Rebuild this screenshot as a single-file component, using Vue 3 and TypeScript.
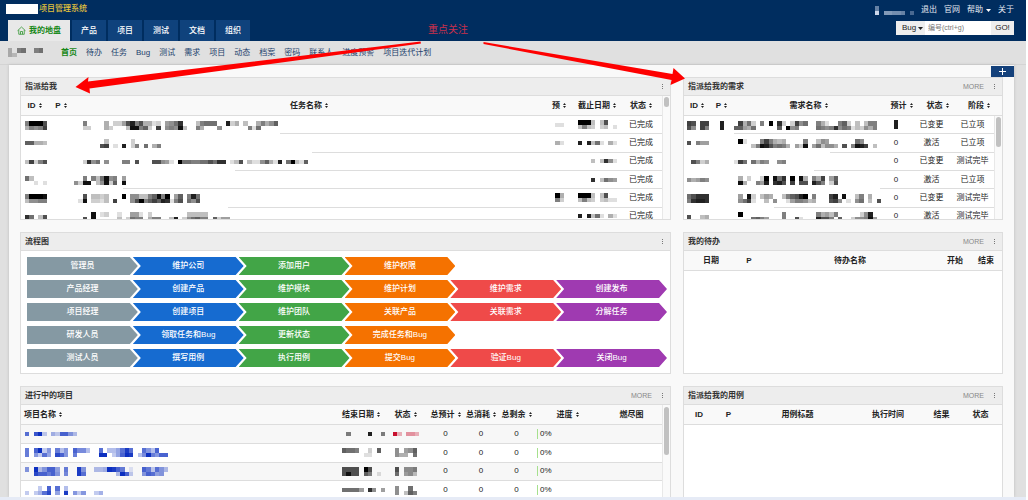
<script setup lang="ts">
import { h, type FunctionalComponent } from 'vue'

interface Column { label: string; width?: number; sort?: boolean }
interface Task { id: string; name: string; est: string; due: string; line: number }
interface Story { id: string; p: string; name: string; est: string; status: string; stage: string; line: number }
interface Project { name: string; end: string; status: string; tint: string }

/* Pixelated block: two rows separated by "/", one hex digit per cell, 0 is darkest. */
const Mosaic: FunctionalComponent<{ cells: string; tint?: string }> = (props) => {
  const lines = props.cells.split('/')
  const cols = Math.max(...lines.map((l) => l.length))
  const rects = lines.flatMap((line, y) =>
    [...line].flatMap((c, x) =>
      c === '.' ? [] : [h('rect', { x: x * 13, y: y * 13, width: 13, height: 13, 'fill-opacity': 1 - parseInt(c, 16) / 16 })]
    )
  )
  return h('svg', {
    width: Math.round((cols * 13) / 3),
    height: lines.length === 2 ? 9 : 4,
    viewBox: `0 0 ${cols * 13} ${lines.length * 13}`,
    preserveAspectRatio: 'none',
    fill: props.tint ?? '#000',
    'shape-rendering': 'crispEdges',
    'aria-hidden': 'true',
    style: { display: 'block' }
  }, rects)
}
Mosaic.props = ['cells', 'tint']

const SortMark: FunctionalComponent = () =>
  h('svg', { width: 3, height: 5, viewBox: '0 0 6 10', 'aria-hidden': 'true', fill: '#222' }, [
    h('path', { d: 'M3 0 6 4H0zM3 10 0 6h6z' })
  ])

const tabs = ['产品', '项目', '测试', '文档', '组织']
const subnav = ['首页', '待办', '任务', 'Bug', '测试', '需求', '项目', '动态', '档案', '密码', '联系人', '进度预警', '项目迭代计划']

const taskCols: Column[] = [
  { label: 'ID', width: 27, sort: true }, { label: 'P', width: 26, sort: true }, { label: '任务名称', sort: true },
  { label: '预', width: 30, sort: true }, { label: '截止日期', width: 46, sort: true }, { label: '状态', width: 42, sort: true }
]
const tasks: Task[] = [
  { id: '80005/b8984', name: '..8....b.dda5285bbed.a973...c8777..2db.c..b8b96/..dd...bd...c1186d.4.9891c..8b...9......8e7', est: 'ee', due: '000c.c5/c8cd.dc.e', line: 206 },
  { id: '66bbc', name: '.......c.....d/......54.e.2.d8.7.b8', est: 'be', due: '2.2c7e.be', line: 238 },
  { id: 'c4d85', name: '..d397.9...88.5...559ae.07788775733.ec5.cee96be2.70ce6', est: '', due: '...c.c39e', line: 161 },
  { id: '7c/..e.e', name: '..8.8c7198.a/9d11.c91d6.1', est: '', due: '...3.c79a', line: 49 },
  { id: '80001/c9988', name: '..5.ccdc...0.99cc86180.a6.827/.e1.ddec.4...950864623e85.795', est: '0b/8d', due: '000c.c5/c8cd.dcee', line: 154 },
  { id: '37.c5', name: '....1.ed..e..aae.d........ccccc/..5.1.....c.d788.b88..c2.d97688.6daa', est: '', due: '2.2c7e.be', line: 162 }
]

const storyCols: Column[] = [
  { label: 'ID', width: 26, sort: true }, { label: 'P', width: 23, sort: true }, { label: '需求名称', sort: true },
  { label: '预计', width: 35, sort: true }, { label: '状态', width: 37, sort: true }, { label: '阶段', width: 46, sort: true }
]
const stories: Story[] = [
  { id: '45.44/59.48', p: '2/2', name: '.4b7d.8.0.3d.d497..8be..86d.c.c88/66ab7.....6.098....78983978ecd9b8', est: '', status: '已变更', stage: '已立项', line: 0 },
  { id: '5.8aa', p: '', name: '.0e...848bcb....8..c9a......79/....c8125878b.ad1.a7c99b.5.8124.c', est: '0', status: '激活', stage: '已立项', line: 96 },
  { id: '.58db', p: '', name: 'e47.7b89..98', est: '0', status: '已变更', stage: '测试完毕', line: 80 },
  { id: '9ba89', p: '', name: '.b.d..d0.173.0.1b.8b4.a6/.1b..8a2.325.4.55.258.d5', est: '0', status: '激活', stage: '已立项', line: 146 },
  { id: '75333/83223', p: '', name: '.a.1d.cab..c86520.8...42.1..c8.b/.974e..c.9..ea889cb...549.e.97.c.5', est: '0', status: '已变更', stage: '测试完毕', line: 40 },
  { id: '5..cb', p: '', name: '.0.........8.......8bac8.....d92/....768a...8..5e...2558.6..d9981a', est: '0', status: '激活', stage: '测试完毕', line: 0 }
]

const todoCols: Column[] = [
  { label: '日期', width: 54 }, { label: 'P', width: 22 }, { label: '待办名称' }, { label: '开始', width: 30 }, { label: '结束', width: 32 }
]
const caseCols: Column[] = [
  { label: 'ID', width: 30 }, { label: 'P', width: 29 }, { label: '用例标题' },
  { label: '执行时间', width: 72 }, { label: '结果', width: 35 }, { label: '状态', width: 43 }
]
const projectCols: Column[] = [
  { label: '项目名称', sort: true }, { label: '结束日期', width: 44, sort: true }, { label: '状态', width: 45, sort: true },
  { label: '总预计', width: 35, sort: true }, { label: '总消耗', width: 36, sort: true }, { label: '总剩余', width: 35, sort: true },
  { label: '进度', width: 67, sort: true }, { label: '燃尽图', width: 61 }
]
const projects: Project[] = [
  { name: '5.30c.ac448b', end: '.8....2..8', status: '0b.99b', tint: '#c8102e' },
  { name: '6.40c8.6b8.477b..5.bb9515..58b4/6.8c59.248.6.....00.c9401.b706844', end: '6778..d.6/.....ee', status: '9.a96/9bb.7', tint: '#000' },
  { name: '8.0b8449.6..18..bba0146.e..46c58b/..244648.7..15.......b04c..84598', end: '5555.05/5155.68.e', status: '5.998/7.a9c', tint: '#000' },
  { name: '...c.4.5.b/c.ca52.9.1.8c8..ca', end: '7777a.39.a', status: '9..7./9.c68', tint: '#000' }
]

const flow: string[][] = [
  ['管理员', '维护公司', '添加用户', '维护权限'],
  ['产品经理', '创建产品', '维护模块', '维护计划', '维护需求', '创建发布'],
  ['项目经理', '创建项目', '维护团队', '关联产品', '关联需求', '分解任务'],
  ['研发人员', '领取任务和Bug', '更新状态', '完成任务和Bug'],
  ['测试人员', '撰写用例', '执行用例', '提交Bug', '验证Bug', '关闭Bug']
]
</script>

<template>
  <div class="page">
    <header class="top">
      <div class="brand-row">
        <div class="brand"><span class="mask"></span><span>项目管理系统</span></div>
        <nav class="user">
          <Mosaic cells="9......../2.77889.b" tint="#e8f0ff" />
          <a href="#">退出</a>
          <a href="#">官网</a>
          <a href="#" class="help">帮助<svg width="5" height="3" viewBox="0 0 10 6"><path d="M0 0h10L5 6z" fill="#fff" /></svg></a>
          <a href="#">关于</a>
        </nav>
      </div>
      <div class="tab-row">
        <nav class="tabs">
          <a href="#" class="tab active">
            <svg width="9" height="9" viewBox="0 0 18 18" fill="none" stroke="#259025" stroke-width="1.500"><path d="M1 9.500 9 2l8 7.500M3.500 8v8.500h11V8M7 16.500V11h4v5.500" /></svg>
            <span>我的地盘</span>
          </a>
          <a v-for="t in tabs" :key="t" href="#" class="tab">{{ t }}</a>
        </nav>
        <form class="search" @submit.prevent>
          <div class="pick">
            <select aria-label="搜索类型"><option>Bug</option></select>
            <svg width="5" height="3" viewBox="0 0 10 6"><path d="M0 0h10L5 6z" fill="#222" /></svg>
          </div>
          <input type="text" aria-label="编号" placeholder="编号(ctrl+g)" />
          <button type="submit">GO!</button>
        </form>
      </div>
      <p class="note">重点关注</p>
    </header>

    <nav class="subnav">
      <div class="crumb"><Mosaic cells="c.98..98/cd" /></div>
      <a v-for="(s, i) in subnav" :key="s" href="#" :class="{ on: i === 0 }">{{ s }}</a>
    </nav>

    <main class="board">
      <button type="button" class="add" aria-label="添加区块">
        <svg width="9" height="9" viewBox="0 0 9 9" stroke="#fff" stroke-width="1"><path d="M4.500 1v7M1 4.500h7" /></svg>
      </button>

      <section class="panel">
        <div class="head"><h2>指派给我</h2><button type="button" class="dots" aria-label="菜单"><i></i><i></i><i></i></button></div>
        <div class="body">
          <table class="tall">
            <colgroup><col v-for="c in taskCols" :key="c.label" :style="{ width: c.width ? c.width + 'px' : 'auto' }" /></colgroup>
            <thead><tr><th v-for="c in taskCols" :key="c.label"><span class="th">{{ c.label }}<SortMark /></span></th></tr></thead>
            <tbody>
              <tr v-for="(t, i) in tasks" :key="i">
                <td class="bare pad"><Mosaic :cells="t.id" /></td>
                <td class="bare"></td>
                <td class="bare rule" :style="{ '--start': t.line + 'px' }"><Mosaic :cells="t.name" /></td>
                <td><div class="mid"><Mosaic v-if="t.est" :cells="t.est" /></div></td>
                <td class="pad"><Mosaic :cells="t.due" /></td>
                <td>已完成</td>
              </tr>
            </tbody>
          </table>
          <div class="track"><span class="thumb small"></span></div>
        </div>
      </section>

      <section class="panel">
        <div class="head"><h2>指派给我的需求</h2><a href="#" class="more">MORE</a><button type="button" class="dots" aria-label="菜单"><i></i><i></i><i></i></button></div>
        <table>
          <colgroup><col v-for="c in storyCols" :key="c.label" :style="{ width: c.width ? c.width + 'px' : 'auto' }" /></colgroup>
          <thead><tr><th v-for="c in storyCols" :key="c.label"><span class="th">{{ c.label }}<SortMark /></span></th></tr></thead>
        </table>
        <div class="body">
          <table class="stories">
            <colgroup><col class="w26" /><col class="w24" /><col /><col class="w32" /><col class="w39" /><col class="w43" /></colgroup>
            <tbody>
              <tr v-for="(s, i) in stories" :key="i">
                <td class="bare near"><Mosaic :cells="s.id" /></td>
                <td class="bare"><div class="mid"><Mosaic v-if="s.p" :cells="s.p" /></div></td>
                <td class="bare rule" :style="{ '--start': s.line + 'px' }"><Mosaic :cells="s.name" /></td>
                <td><template v-if="s.est">{{ s.est }}</template><div v-else class="mid"><Mosaic cells="2/2" /></div></td>
                <td>{{ s.status }}</td>
                <td>{{ s.stage }}</td>
              </tr>
            </tbody>
          </table>
          <div class="track"><span class="thumb"></span></div>
        </div>
      </section>

      <section class="panel">
        <div class="head"><h2>流程图</h2><button type="button" class="dots" aria-label="菜单"><i></i><i></i><i></i></button></div>
        <div class="flow">
          <div v-for="(row, r) in flow" :key="r" class="flow-row">
            <span v-for="(s, i) in row" :key="s" class="step" :class="'c' + i">{{ s }}</span>
          </div>
        </div>
      </section>

      <section class="panel">
        <div class="head"><h2>我的待办</h2><a href="#" class="more">MORE</a><button type="button" class="dots" aria-label="菜单"><i></i><i></i><i></i></button></div>
        <table>
          <colgroup><col v-for="c in todoCols" :key="c.label" :style="{ width: c.width ? c.width + 'px' : 'auto' }" /></colgroup>
          <thead><tr><th v-for="c in todoCols" :key="c.label">{{ c.label }}</th></tr></thead>
        </table>
      </section>

      <section class="panel">
        <div class="head"><h2>进行中的项目</h2><a href="#" class="more">MORE</a><button type="button" class="dots" aria-label="菜单"><i></i><i></i><i></i></button></div>
        <div class="body">
          <table class="projects">
            <colgroup><col v-for="c in projectCols" :key="c.label" :style="{ width: c.width ? c.width + 'px' : 'auto' }" /></colgroup>
            <thead><tr><th v-for="c in projectCols" :key="c.label"><span class="th">{{ c.label }}<SortMark v-if="c.sort" /></span></th></tr></thead>
            <tbody>
              <tr v-for="(p, i) in projects" :key="i">
                <td class="pad"><Mosaic :cells="p.name" tint="#0c2fc0" /></td>
                <td class="near"><Mosaic :cells="p.end" /></td>
                <td><div class="mid"><Mosaic :cells="p.status" :tint="p.tint" /></div></td>
                <td>0</td>
                <td>0</td>
                <td>0</td>
                <td class="near"><span class="progress">0%</span></td>
                <td></td>
              </tr>
            </tbody>
          </table>
          <div class="track"><span class="thumb long"></span></div>
        </div>
      </section>

      <section class="panel">
        <div class="head"><h2>指派给我的用例</h2><a href="#" class="more">MORE</a><button type="button" class="dots" aria-label="菜单"><i></i><i></i><i></i></button></div>
        <table>
          <colgroup><col v-for="c in caseCols" :key="c.label" :style="{ width: c.width ? c.width + 'px' : 'auto' }" /></colgroup>
          <thead><tr><th v-for="c in caseCols" :key="c.label">{{ c.label }}</th></tr></thead>
        </table>
      </section>
    </main>

    <svg class="arrows" width="700" height="100" viewBox="0 0 700 100" fill="#fe0000" aria-hidden="true">
      <path d="M420.500 41.500 88 81.500 88.500 77 75.500 87 90 93.500 89.500 88.500 421 43.500z" />
      <path d="M483.500 42 672.500 74 673.500 68 685 78.500 670.500 85 671.500 80 483.500 44z" />
    </svg>
  </div>
</template>

<style>
html, body { margin: 0; background: #fff; }
</style>

<style scoped>
.page {
  position: relative;
  box-sizing: border-box;
  height: 100vh;
  margin-right: 2px;
  overflow: hidden;
  display: flex;
  flex-direction: column;
  background: #e0e0e0;
  border-bottom: 3px solid #e6ebf6;
  font: 8px/12px "Liberation Sans", "Noto Sans CJK SC", sans-serif;
  color: #222;
}
a { color: inherit; text-decoration: none; }
button, input, select { font: inherit; border: 0; margin: 0; padding: 0; border-radius: 0; }

.top { position: relative; flex: none; background: #002d5f; }
.brand-row { height: 20px; display: flex; justify-content: space-between; padding: 0 12px 0 6px; }
.brand { display: flex; align-items: center; height: 17px; color: #e3c23c; font-weight: 500; }
.mask { width: 32px; height: 10px; margin-right: 1px; background: #fff; }
.user { display: flex; align-items: center; gap: 7px; color: #e6ebf2; }
.help { display: flex; align-items: center; gap: 3px; }
.tab-row { display: flex; justify-content: space-between; padding: 0 12px 0 8px; height: 21px; }
.tabs { display: flex; gap: 2px; }
.tab { display: flex; align-items: center; gap: 3px; padding: 0 9px; background: #0f427c; color: #fff; font-weight: 500; }
.tab.active { background: #e8e8e8; color: #168716; font-weight: 700; }
.search { display: flex; height: 14px; margin-top: 1px; border: 0; }
.pick { position: relative; display: flex; background: #eee; }
.pick select { width: 29px; padding-left: 6px; appearance: none; background: transparent; color: #222; }
.pick svg { position: absolute; right: 2px; top: 6px; pointer-events: none; }
.search input { width: 66px; box-sizing: border-box; padding: 0 3px; background: #fff; color: #333; font-size: 7px; }
.search input::placeholder { color: #777; opacity: 1; }
.search button { width: 23px; background: #eee; color: #222; }
.note { position: absolute; left: 428px; top: 23px; margin: 0; font-size: 10px; line-height: 14px; color: #c8304c; }

.subnav { flex: none; height: 24px; display: flex; align-items: center; gap: 9px; padding-left: 8px; color: #1c3f6c; border-bottom: 1px solid #d4d4d4; box-sizing: border-box; }
.crumb { width: 44px; }
.subnav .on { color: #168716; font-weight: 700; }

.board {
  position: relative;
  flex: 1;
  min-height: 0;
  margin: 0 12px 0 9px;
  padding: 12px 11px 0;
  background: #f9f9f9;
  box-shadow: 0 0 3px #bbb;
  display: grid;
  grid-template-columns: minmax(0, 651fr) minmax(0, 320fr);
  grid-template-rows: 143px 142px 142px;
  gap: 12px;
}
.add { position: absolute; right: 0; top: 1px; width: 23px; height: 11px; display: grid; place-items: center; background: #14417b; }

.panel { border: 1px solid #ddd; background: #fff; overflow: hidden; display: flex; flex-direction: column; }
.head { flex: none; height: 18px; box-sizing: border-box; display: flex; align-items: center; background: #ededed; border-bottom: 1px solid #ddd; padding: 0 6px 0 4px; }
.head h2 { flex: 1; margin: 0; font-size: 8px; line-height: 12px; font-weight: 700; color: #333; }
.more { font-size: 7px; color: #888; margin-right: 8px; }
.dots { width: 4px; display: flex; flex-direction: column; align-items: center; gap: 1px; background: none; }
.dots i { width: 1px; height: 1px; background: #777; }

.body { display: flex; align-items: flex-start; min-height: 0; }
table { width: 100%; table-layout: fixed; border-collapse: separate; border-spacing: 0; }
.body table { flex: 1; width: 0; }
.tall { height: 130px; }
.stories { height: 110px; }
.projects { height: 95px; }
.w24 { width: 24px; } .w26 { width: 26px; } .w32 { width: 32px; } .w39 { width: 39px; } .w43 { width: 43px; }
th, td { padding: 0; text-align: center; white-space: nowrap; line-height: 12px; border-bottom: 1px solid #ddd; }
th { height: 19px; background: #f9f9f9; font-weight: 700; color: #222; }
.th { display: flex; align-items: center; justify-content: center; gap: 3px; }
.projects th:first-child .th { justify-content: flex-start; padding-left: 3px; }
.bare { border-bottom: 0; }
.rule { background: linear-gradient(#ddd, #ddd) right bottom / calc(100% - var(--start)) 1px no-repeat; }
.pad { padding-left: 4px; }
.near { padding-left: 3px; }
.mid { display: flex; justify-content: center; }
.projects tbody tr:nth-child(odd) { background: #f7f7f7; }
.progress { display: block; width: 12px; border-left: 1px solid #a6e08e; padding-left: 2px; line-height: 10px; text-align: left; }
.track { flex: none; align-self: stretch; width: 7px; background: #fafafa; border-left: 1px solid #e8e8e8; }
.thumb { display: block; width: 5px; height: 30px; margin: 1px auto; border-radius: 3px; background: #c1c1c1; }
.thumb.small { height: 10px; }
.thumb.long { height: 48px; margin-top: 2px; }

.flow { height: 111px; padding: 6px 3px 6px 6px; display: flex; flex-direction: column; justify-content: space-between; }
.flow-row { display: grid; grid-template-columns: repeat(6, minmax(0, 1fr)); padding-right: 5px; }
.step {
  height: 18px;
  line-height: 18px;
  margin-right: -5px;
  text-align: center;
  font-weight: 500;
  color: #fff;
  clip-path: polygon(0 0, calc(100% - 8px) 0, 100% 50%, calc(100% - 8px) 100%, 0 100%, 8px 50%);
}
.c0 { background: #8599a3; clip-path: polygon(0 0, calc(100% - 8px) 0, 100% 50%, calc(100% - 8px) 100%, 0 100%); }
.c1 { background: #166bd0; }
.c2 { background: #42a547; }
.c3 { background: #f57200; }
.c4 { background: #ef4a49; }
.c5 { background: #9f3ab1; }

.arrows { position: absolute; left: 0; top: 0; pointer-events: none; }
</style>
